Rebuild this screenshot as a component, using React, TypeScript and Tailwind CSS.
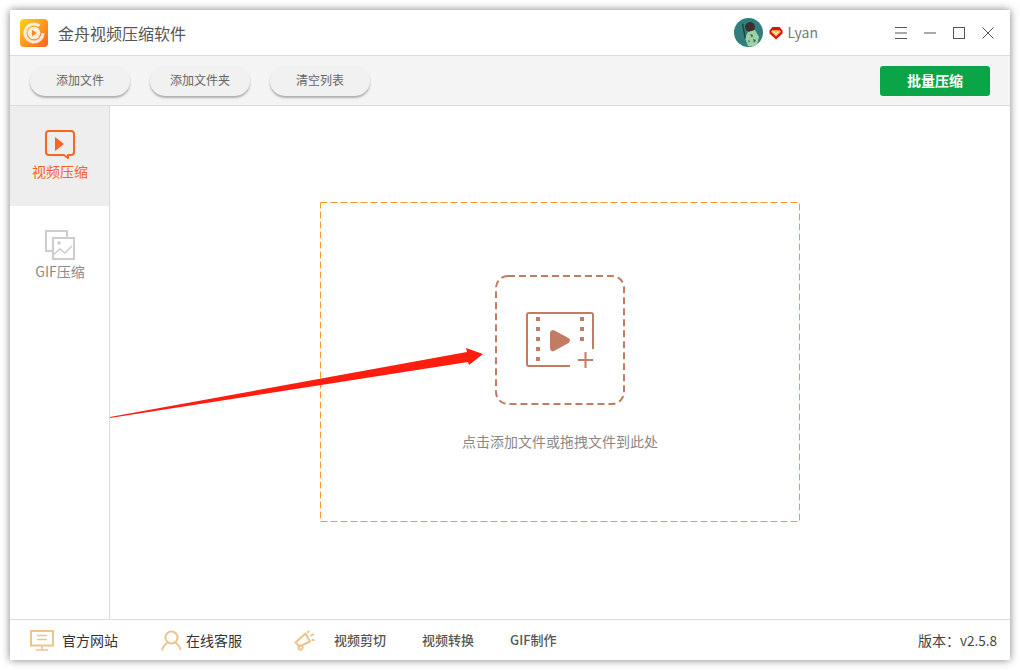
const font = "font-['Noto_Sans_CJK_SC','Noto_Sans',sans-serif]";

function Logo() {
  return (
    <svg width="28" height="28" viewBox="0 0 28 28">
      <defs>
        <linearGradient id="lg" x1="0" y1="0" x2="1" y2="1">
          <stop offset="0" stopColor="#ffd21a" />
          <stop offset="0.5" stopColor="#ff9a1f" />
          <stop offset="1" stopColor="#fb5f22" />
        </linearGradient>
      </defs>
      <rect width="28" height="28" rx="4" fill="url(#lg)" />
      <path d="M19.5 6.8A9 9 0 1 0 23 14" fill="none" stroke="#fff" strokeOpacity="0.8" strokeWidth="3" />
      <circle cx="14" cy="14" r="6.3" fill="#fff" fillOpacity="0.85" />
      <path d="M12 10.8l5 3.2-5 3.2z" fill="#fb8a20" />
    </svg>
  );
}

function Avatar() {
  return (
    <svg width="29" height="29" viewBox="0 0 29 29">
      <circle cx="14.5" cy="14.5" r="14.5" fill="#2f7f7c" />
      <circle cx="16" cy="9" r="5" fill="#3f2f2a" />
      <path d="M14 14l7-2 4 7-2 8a14.500 14.500 0 0 1-9 1l-3-8z" fill="#9fd0a8" />
      <path d="M16 16l3 1-1 3zM19 21l3 1-2 3zM14 22l2 1-1 2z" fill="#2f6e55" />
      <rect x="9" y="6" width="1.4" height="15" fill="#27403c" transform="rotate(-10 9 12)" />
    </svg>
  );
}

function Gem() {
  return (
    <svg width="14" height="14" viewBox="0 0 14 14">
      <path d="M3.5 1h7L13.5 4.5V7.5L7 13.5.5 7.5V4.5z" fill="#d4160f" />
      <path d="M3 4.2h8l1 1.6L7 10.5 2 5.8z" fill="#f6c04a" />
      <path d="M4.5 5.5L7 8l2.5-2.5" fill="none" stroke="#fff" strokeWidth="1" />
    </svg>
  );
}

function WinControls() {
  return (
    <div className="flex items-center gap-[17px] text-[#555]">
      <svg width="12" height="12" viewBox="0 0 12 12" stroke="currentColor" fill="none">
        <path d="M0 .5h12M0 6h12M0 11.5h12" />
      </svg>
      <svg width="12" height="12" viewBox="0 0 12 12" stroke="currentColor" fill="none">
        <path d="M0 6h12" />
      </svg>
      <svg width="12" height="12" viewBox="0 0 12 12" stroke="currentColor" fill="none">
        <rect x=".5" y=".5" width="11" height="11" />
      </svg>
      <svg width="12" height="12" viewBox="0 0 12 12" stroke="currentColor" fill="none">
        <path d="M.5.5l11 11M11.5.5l-11 11" />
      </svg>
    </div>
  );
}

function ToolButton({ label }: { label: string }) {
  return (
    <button className="h-[30px] w-[100px] rounded-[15px] bg-[#f1f1f1] pb-[2px] text-[12px] leading-[26px] text-[#666] shadow-[0_2px_2px_rgba(0,0,0,0.28)]">
      {label}
    </button>
  );
}

function VideoNavIcon() {
  return (
    <svg width="30" height="30" viewBox="0 0 30 30" fill="none">
      <path d="M4 1h22a3 3 0 0 1 3 3v18a3 3 0 0 1-3 3h-3v3l-4-3H4a3 3 0 0 1-3-3V4a3 3 0 0 1 3-3z" stroke="#fb6422" strokeWidth="2" strokeLinejoin="round" />
      <path d="M10 7l9 7-9 7z" fill="#fb6422" />
    </svg>
  );
}

function GifNavIcon() {
  return (
    <svg width="30" height="30" viewBox="0 0 30 30" fill="none" stroke="#cdcdcd" strokeWidth="2">
      <path d="M8 21H1V1h21v7" />
      <rect x="8" y="8" width="21" height="21" />
      <circle cx="14" cy="13" r="1.8" fill="#cdcdcd" stroke="none" />
      <path d="M8 25l7-6 5 4 7-7" strokeWidth="1.6" />
    </svg>
  );
}

function DropIcon() {
  return (
    <svg className="mt-[2px]" width="68" height="58" viewBox="0 0 68 58" fill="none" stroke="#c27c63" strokeWidth="2">
      <path d="M44 54H3a2 2 0 0 1-2-2V3a2 2 0 0 1 2-2h62a2 2 0 0 1 2 2v34" />
      <path d="M12 5v4M12 15v4M12 25v4M12 35v4M12 45v4M56 5v4M56 15v4M56 25v4" strokeWidth="4" />
      <path d="M25 21a2 2 0 0 1 3-1.7l14 7.5a2 2 0 0 1 0 3.400l-14 7.800a2 2 0 0 1-3-1.700z" fill="#c27c63" stroke="#c27c63" />
      <path d="M52 48h15M59.500 40v16" />
    </svg>
  );
}

function Arrow() {
  return (
    <svg className="absolute left-0 top-[236px]" width="380" height="80" viewBox="0 0 380 80">
      <path d="M0 75L357 10 356 6 373 12 359 23 358 20 0 76z" fill="#ff1d10" />
    </svg>
  );
}

function DashedFrame({ r, w, color, dash }: { r: number; w: number; color: string; dash: string }) {
  return (
    <svg className="absolute inset-0 h-full w-full" fill="none">
      <rect x={w / 2} y={w / 2} width="100%" height="100%" rx={r} stroke={color} strokeWidth={w} strokeDasharray={dash} style={{ width: `calc(100% - ${w}px)`, height: `calc(100% - ${w}px)` }} />
    </svg>
  );
}

function FooterIcon({ kind }: { kind: "monitor" | "user" | "horn" }) {
  const s = { fill: "none", stroke: "#ecc48e", strokeWidth: 2 };
  if (kind === "monitor")
    return (
      <svg width="24" height="21" viewBox="0 0 24 21" {...s}>
        <rect x="1" y="1" width="22" height="14.500" />
        <path d="M7 5.500h10M7 9.500h10M12 15.500v4M6 20h12" strokeWidth="1.600" />
      </svg>
    );
  if (kind === "user")
    return (
      <svg width="20" height="21" viewBox="0 0 20 21" {...s}>
        <circle cx="10.500" cy="7.500" r="6" />
        <path d="M1 20.500c1-4.500 3.500-6.500 5.500-8M20 20.500c-1-4.500-3.500-6.500-5.500-8" />
        <path d="M3.500 7.500h1M16.500 7.500h1" />
      </svg>
    );
  return (
    <svg width="21" height="21" viewBox="0 0 21 21" {...s}>
      <path d="M1.500 12.500L11.500 3.500l4.500 8-10.500 5z" strokeLinejoin="round" strokeWidth="2" />
      <circle cx="6.500" cy="17.500" r="2.200" strokeWidth="1.800" />
      <path d="M13.500 3l1.500-2.500M16.500 6l3.500-2M17.500 10h3" strokeWidth="1.800" />
    </svg>
  );
}

export default function App() {
  return (
    <div className={`h-[670px] w-[1020px] bg-white p-[10px] ${font}`}>
      <div className="flex h-[650px] w-[1000px] flex-col bg-white shadow-[0_0_8px_rgba(0,0,0,0.5)]">
        <header className="flex h-[46px] shrink-0 items-center border-b border-[#dcdcdc] pl-[10px] pr-[16px]">
          <Logo />
          <div className="ml-[10px] text-[16px] text-[#555]">金舟视频压缩软件</div>
          <div className="ml-auto flex items-center">
            <Avatar />
            <span className="ml-[6px]"><Gem /></span>
            <span className="ml-[5px] text-[14px] text-[#777]">Lyan</span>
            <span className="ml-[77px]"><WinControls /></span>
          </div>
        </header>
        <div className="flex h-[50px] shrink-0 items-center gap-5 border-b border-[#dcdcdc] bg-[#f4f4f4] px-5">
          <ToolButton label="添加文件" />
          <ToolButton label="添加文件夹" />
          <ToolButton label="清空列表" />
          <button className="ml-auto h-[30px] w-[110px] rounded-[3px] bg-[#0aa546] text-[14px] font-bold text-white">批量压缩</button>
        </div>
        <div className="flex min-h-0 flex-1">
          <aside className="w-[100px] shrink-0 border-r border-[#dcdcdc]">
            <div className="flex h-[100px] flex-col items-center bg-[#eeeeee] pt-6 text-[14px] leading-[20px] text-[#fb6422]">
              <VideoNavIcon />
              <span className="mt-[1px] pl-[1px]">视频压缩</span>
            </div>
            <div className="flex h-[100px] flex-col items-center pt-6 text-[14px] leading-[20px] text-[#8a8a8a]">
              <GifNavIcon />
              <span className="mt-[1px] pl-[1px]">GIF压缩</span>
            </div>
          </aside>
          <main className="relative flex-1">
            <div className="relative ml-[210px] mt-[96px] flex h-[320px] w-[480px] flex-col items-center pt-[73px]">
              <DashedFrame r={0} w={1} color="#ff9a2a" dash="7 3" />
              <div className="relative flex h-[130px] w-[130px] items-center justify-center">
                <DashedFrame r={12} w={2} color="#c27c63" dash="7 4" />
                <DropIcon />
              </div>
              <div className="mt-[26px] text-[14px] text-[#888]">点击添加文件或拖拽文件到此处</div>
            </div>
            <Arrow />
          </main>
        </div>
        <footer className="flex h-[41px] shrink-0 items-center border-t border-[#dcdcdc] pl-5 pr-[13px] text-[14px]">
          <FooterIcon kind="monitor" />
          <span className="ml-[8px] text-[#333]">官方网站</span>
          <span className="ml-[43px]"><FooterIcon kind="user" /></span>
          <span className="ml-[5px] text-[#333]">在线客服</span>
          <span className="ml-[52px]"><FooterIcon kind="horn" /></span>
          <span className="ml-[19px] text-[13px] font-medium text-[#555]">视频剪切</span>
          <span className="ml-[36px] text-[13px] font-medium text-[#555]">视频转换</span>
          <span className="ml-[36px] text-[13px] font-medium text-[#555]">GIF制作</span>
          <span className="ml-auto text-[#444]">版本：<span className="text-[13.5px]">v2.5.8</span></span>
        </footer>
      </div>
    </div>
  );
}
